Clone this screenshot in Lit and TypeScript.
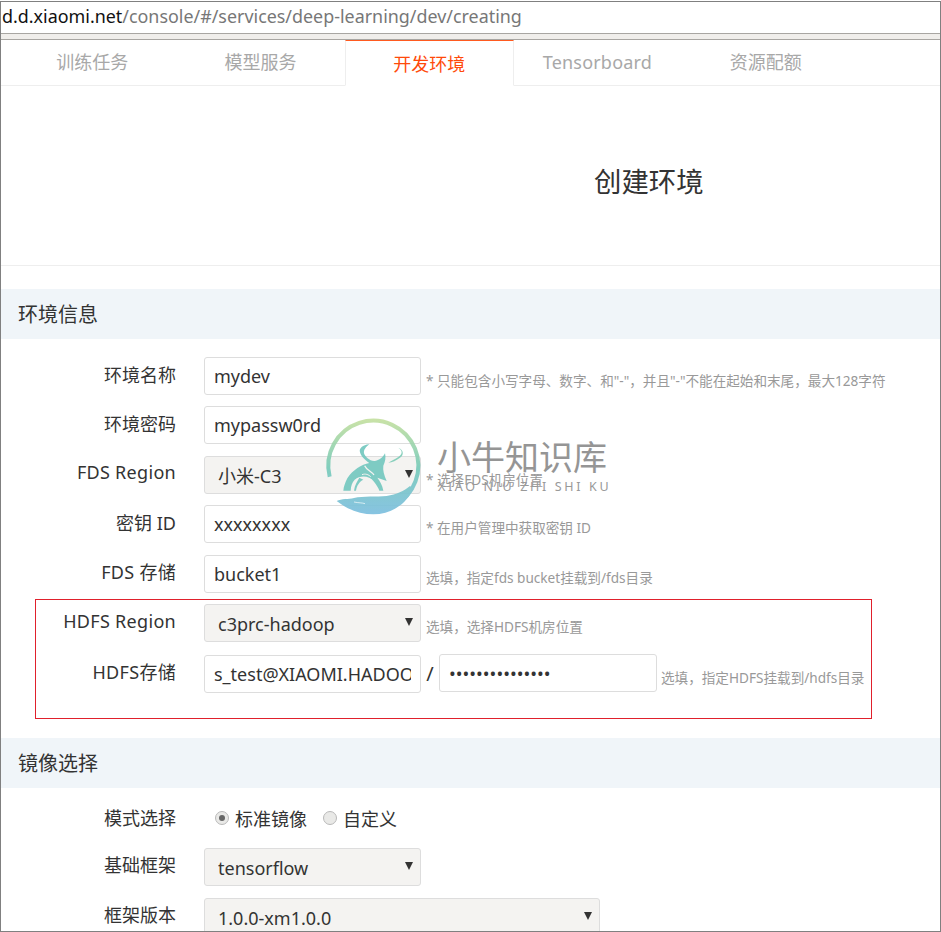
import { LitElement, html, css, svg } from "lit";
import { customElement } from "lit/decorators.js";

const SANS = css`"Noto Sans", "Noto Sans CJK SC", sans-serif`;

@customElement("app-root")
export class AppRoot extends LitElement {
  static styles = css`
    :host {
      display: block;
      width: 941px;
      height: 932px;
      overflow: hidden;
      background: #fff;
      font-family: ${SANS};
      color: #333;
    }
    * { box-sizing: border-box; }
    .frame {
      position: relative;
      margin-top: 1px;
      height: 931px;
      border: 1px solid #808080;
      overflow: hidden;
    }
    .url {
      height: 32px;
      border-bottom: 1px solid #a8a6a2;
      padding-left: 1px;
      font-size: 17.9px;
      line-height: 28px;
      color: #777;
      white-space: nowrap;
    }
    .url b { font-weight: 400; color: #111; }
    .strip {
      height: 6px;
      background: #f0eeeb;
      border-bottom: 1px solid #a8a6a2;
    }
    .tabs {
      display: flex;
      height: 46px;
      padding-left: 7px;
      border-bottom: 1px solid #eee;
    }
    .tab {
      width: 168.4px;
      height: 46px;
      text-align: center;
      font-size: 18px;
      line-height: 44px;
      color: #a8a8a8;
    }
    .tab.latin { letter-spacing: .2px; }
    .tab.active {
      width: 169px;
      margin-right: -.6px;
      color: #ff4a0a;
      line-height: 47px;
      background: #fff;
      border-top: 1px solid #ff5a1f;
      border-left: 1px solid #eee;
      border-right: 1px solid #eee;
      border-bottom: 1px solid #fff;
    }
    .title {
      height: 180px;
      border-bottom: 1px solid #eee;
      padding: 73px 0 0 593px;
      font-size: 27.4px;
      line-height: 46px;
      color: #333;
      font-weight: 400;
      margin: 0;
    }
    .section {
      height: 50px;
      margin: 23px 0 0;
      padding-left: 17px;
      background: #f0f5f9;
      font-size: 20px;
      line-height: 51px;
      font-weight: 400;
      color: #333;
    }
    .rows { display: flex; flex-direction: column; gap: 11.4px; padding-top: 18px; }
    .row { display: flex; height: 38px; align-items: center; }
    .label {
      flex: none;
      width: 175px;
      margin-right: 28px;
      text-align: right;
      font-size: 18px;
      line-height: 36px;
      padding-bottom: 3px;
    }
    .label.latin { letter-spacing: .3px; }
    .label.lift { padding-bottom: 6px; }
    .field {
      flex: none;
      width: 217px;
      height: 38px;
      border: 1px solid #ddd;
      border-radius: 3px;
      padding: 0 9px;
      background: #fff;
      font: inherit;
      font-size: 18px;
      color: #333;
      outline: none;
    }
    .pick { position: relative; flex: none; width: 217px; height: 38px; }
    .pick.wide { width: 396px; }
    .pick select {
      appearance: none;
      display: block;
      width: 100%;
      height: 100%;
      border: 1px solid #ddd;
      border-radius: 3px;
      padding: 2px 13px 0;
      background: #f4f3f1;
      font: inherit;
      font-size: 18px;
      color: #333;
    }
    .pick::after {
      content: "";
      position: absolute;
      right: 8px;
      top: 14px;
      border-left: 4px solid transparent;
      border-right: 4px solid transparent;
      border-top: 8px solid #333;
    }
    .hint {
      margin-left: 5px;
      padding-top: 8px;
      font-size: 13.6px;
      color: #999;
      white-space: nowrap;
    }
    .hint.up { padding-top: 6px; }
    .box {
      margin: 6.4px 0 0 34px;
      width: 837px;
      height: 120px;
      border: 1px solid #e0202c;
      padding-top: 4px;
      display: flex;
      flex-direction: column;
    }
    .box .label { width: 140px; padding-bottom: 4px; }
    .box .hint { padding-top: 6px; }
    .box .row + .row { margin-top: 13px; }
    .slash { margin: 0 5px; font-size: 20px; width: 8px; text-align: center; flex: none; }
    .box .pw { width: 218px; margin-top: -2px; }
    .hint.pw-hint { margin-left: 4px; }
    .after { margin-top: 19px; }
    .radio-row { height: 30px; margin-top: 15px; }
    .radio-row .label { padding-bottom: 0; }
    .radios { display: flex; align-items: center; font-size: 18px; padding-left: 11px; }
    .radio {
      width: 14px;
      height: 14px;
      border-radius: 50%;
      border: 1px solid #b9b9b9;
      background: #e9e9e7;
      margin-right: 6px;
      display: grid;
      place-items: center;
    }
    .radio.on::before {
      content: "";
      width: 6px;
      height: 6px;
      border-radius: 50%;
      background: #666;
    }
    .radios span + .radio { margin-left: 16px; }
    .rows.second { padding-top: 15px; gap: 12px; }
    .mark {
      position: absolute;
      left: 326px;
      top: 413px;
      width: 290px;
      height: 110px;
      pointer-events: none;
    }
    .mark svg { position: absolute; left: 3px; top: -2px; overflow: visible; opacity: .92; }
    .cn {
      position: absolute;
      left: 110px;
      top: 19px;
      font-size: 34px;
      line-height: 46px;
      color: #8a8a8a;
      opacity: .9;
      white-space: nowrap;
    }
    .en {
      position: absolute;
      left: 111px;
      top: 63px;
      font-size: 12.5px;
      line-height: 18px;
      letter-spacing: 2.65px;
      color: #999;
      white-space: nowrap;
    }
  `;

  private input(label: string, value: string, hint: string, cls = "", hintCls = "") {
    return html`<div class="row">
      <div class="label ${cls}">${label}</div>
      <input class="field" type="text" value=${value} />
      ${hint ? html`<div class="hint ${hintCls}">${hint}</div>` : ""}
    </div>`;
  }

  private select(label: string, value: string, hint = "", wide = false, cls = "") {
    return html`<div class="row">
      <div class="label ${cls}">${label}</div>
      <div class="pick ${wide ? "wide" : ""}"><select><option>${value}</option></select></div>
      ${hint ? html`<div class="hint">${hint}</div>` : ""}
    </div>`;
  }

  private logo() {
    return html`<svg width="95" height="110" viewBox="0 -36 285 330">
      <defs>
        <linearGradient id="ring" gradientUnits="userSpaceOnUse" x1="0" y1="-15" x2="0" y2="268">
          <stop offset="0" stop-color="#c4e0a0"></stop>
          <stop offset=".5" stop-color="#78cbb9"></stop>
          <stop offset="1" stop-color="#7dbfe0"></stop>
        </linearGradient>
      </defs>
      ${svg`
        <path d="M-1,155 A135,135 0 1 1 190,243" fill="none" stroke="url(#ring)" stroke-width="12"></path>
        <path fill="url(#ring)" d="M20,228 C35,220 55,224 72,219 C100,212 140,217 170,213 C200,208 222,198 240,183 L250,192 C225,242 180,268 130,268 C90,268 50,252 20,228 Z"></path>
        <path d="M72,231 C85,234 97,233 105,236" fill="none" stroke="#fff" stroke-width="2"></path>
        <path fill="#74c8c0" d="M118,58 C98,60 86,70 90,82 C94,96 106,106 118,114 C95,118 68,135 52,160 C46,172 41,185 40,197 L62,197 C63,182 66,172 74,164 C92,150 118,152 132,170 C140,180 146,190 148,197 L160,197 C157,180 150,168 142,158 L170,168 C162,150 158,135 160,122 C166,110 168,97 165,85 C160,95 150,105 135,108 C120,110 105,95 102,85 C100,75 108,65 118,58 Z"></path>
        <path d="M104,122 C110,136 124,138 132,150" fill="none" stroke="#f4f3f1" stroke-width="4"></path>
        <path d="M88,158 C82,168 74,180 72,197 L78,197 C80,182 88,170 100,164 Z" fill="#74c8c0"></path>
        <path d="M96,149 C106,145 116,149 122,155" fill="none" stroke="#f4f3f1" stroke-width="3"></path>
        <path fill="#7fcdb8" d="M205,68 C216,75 220,85 206,95 C196,102 182,108 175,113 C186,112 200,106 210,98 C222,90 222,75 205,68 Z"></path>
      `}
    </svg>`;
  }

  render() {
    return html`<div class="frame">
      <div class="url"><b>d.d.xiaomi.net</b>/console/#/services/deep-learning/dev/creating</div>
      <div class="strip"></div>
      <nav class="tabs">
        <div class="tab">训练任务</div>
        <div class="tab">模型服务</div>
        <div class="tab active">开发环境</div>
        <div class="tab latin">Tensorboard</div>
        <div class="tab">资源配额</div>
      </nav>
      <h1 class="title">创建环境</h1>

      <h2 class="section">环境信息</h2>
      <div class="rows">
        ${this.input("环境名称", "mydev", '* 只能包含小写字母、数字、和"-"，并且"-"不能在起始和末尾，最大128字符')}
        ${this.input("环境密码", "mypassw0rd", "")}
        ${this.select("FDS Region", "小米-C3", "* 选择FDS机房位置", false, "latin lift")}
        ${this.input("密钥 ID", "xxxxxxxx", "* 在用户管理中获取密钥 ID", "", "up")}
        ${this.input("FDS 存储", "bucket1", "选填，指定fds bucket挂载到/fds目录", "latin", "up")}
      </div>
      <div class="box">
        <div class="row">
          <div class="label latin">HDFS Region</div>
          <div class="pick"><select><option>c3prc-hadoop</option></select></div>
          <div class="hint">选填，选择HDFS机房位置</div>
        </div>
        <div class="row">
          <div class="label latin">HDFS存储</div>
          <input class="field" type="text" value="s_test@XIAOMI.HADOOP" />
          <div class="slash">/</div>
          <input class="field pw" type="password" value="xxxxxxxxxxxxxxx" />
          <div class="hint pw-hint">选填，指定HDFS挂载到/hdfs目录</div>
        </div>
      </div>

      <h2 class="section after">镜像选择</h2>
      <div class="row radio-row">
        <div class="label">模式选择</div>
        <div class="radios">
          <i class="radio on"></i><span>标准镜像</span>
          <i class="radio"></i><span>自定义</span>
        </div>
      </div>
      <div class="rows second">
        ${this.select("基础框架", "tensorflow")}
        ${this.select("框架版本", "1.0.0-xm1.0.0", "", true)}
      </div>

      <div class="mark">
        ${this.logo()}
        <div class="cn">小牛知识库</div>
        <div class="en">XIAO NIU ZHI SHI KU</div>
      </div>
    </div>`;
  }
}
